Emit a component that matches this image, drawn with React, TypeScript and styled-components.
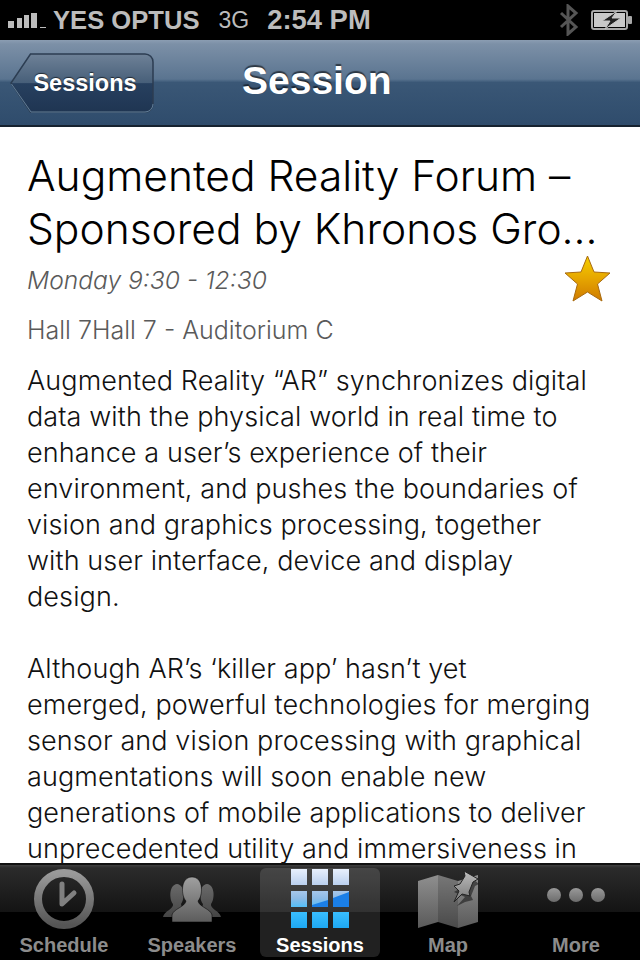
import React from 'react';
import styled, {createGlobalStyle} from 'styled-components';

const Global = createGlobalStyle`
  html, body { margin: 0; padding: 0; background: #fff; }
  #root { width: 640px; height: 960px; overflow: hidden; }
`;

const Page = styled.div`
  width: 640px;
  height: 960px;
  display: flex;
  flex-direction: column;
  overflow: hidden;
  font-family: "Inter", "Liberation Sans", sans-serif;
`;

const StatusBar = styled.div`
  height: 40px;
  flex: none;
  background: #000;
  display: flex;
  align-items: center;
  padding-left: 8px;
  color: #bcbcbc;
  font-family: "Liberation Sans", Arial, sans-serif;
`;

const Carrier = styled.span`
  font-size: 25.6px;
  font-weight: 700;
  margin-left: 7px;
  white-space: nowrap;
`;

const Network = styled.span`
  font-size: 23px;
  margin-left: 19px;
`;

const Clock = styled.span`
  font-size: 27.4px;
  font-weight: 700;
  margin-left: 18px;
  white-space: nowrap;
`;

const StatusRight = styled.div`
  margin-left: auto;
  display: flex;
  align-items: center;
  gap: 11px;
  padding-right: 7px;
`;

const NavBar = styled.div`
  height: 87px;
  flex: none;
  box-sizing: border-box;
  display: flex;
  align-items: center;
  padding: 1px 0 0 10px;
  background: linear-gradient(#8b9db2 0, #7c90a7 4px, #5a7490 46%, #3a5776 50%, #2f4c6c 100%);
  border-bottom: 2px solid #16222f;
`;

const BackButton = styled.div`
  position: relative;
  width: 144px;
  height: 60px;
  display: flex;
  align-items: center;
  justify-content: center;
  padding-left: 6px;
  box-sizing: border-box;
  svg { position: absolute; left: 0; top: 0; }
`;

const BackLabel = styled.span`
  position: relative;
  color: #fff;
  font: 700 23.5px "Liberation Sans", Arial, sans-serif;
  text-shadow: 0 -1px 1px rgba(0, 0, 0, 0.6);
`;

const NavTitle = styled.h1`
  margin: 0 0 4px 88px;
  color: #fff;
  font: 700 39px "Liberation Sans", Arial, sans-serif;
  text-shadow: 0 -2px 1px rgba(0, 0, 0, 0.55);
`;

const Content = styled.main`
  flex: 1;
  min-height: 0;
  overflow: hidden;
  background: #fff;
  padding: 22px 27px 0;
`;

const Title = styled.h2`
  margin: 0;
  width: 580px;
  font-size: 42.5px;
  font-weight: 300;
  line-height: 53px;
  color: #000;
`;

const TitleLine = styled.span`
  display: block;
  white-space: nowrap;
  overflow: hidden;
  text-overflow: ellipsis;
`;

const WhenRow = styled.div`
  display: flex;
  justify-content: space-between;
  align-items: flex-start;
  height: 50px;
`;

const When = styled.div`
  font-size: 24.6px;
  font-style: italic;
  font-weight: 300;
  line-height: 50px;
  color: #5a5a5a;
`;

const Star = styled.svg`
  margin: 0 2px 0 0;
`;

const Where = styled.div`
  font-size: 25px;
  font-weight: 300;
  line-height: 50px;
  color: #5a5a5a;
  margin-bottom: 8px;
`;

const Paragraph = styled.p`
  margin: 0 0 36px;
  font-size: 27px;
  letter-spacing: 0.1px;
  font-weight: 300;
  line-height: 36px;
  color: #111;
  white-space: nowrap;
`;

const TextLine = styled.span`
  display: block;
`;

const TabBar = styled.nav`
  height: 97px;
  flex: none;
  box-sizing: border-box;
  display: grid;
  grid-template-columns: repeat(5, 128px);
  border-top: 2px solid #111;
  background: linear-gradient(#3f3f3f 0, #2b2b2b 3px, #141414 49%, #000 50%, #000 100%);
`;

const Tab = styled.div<{$active?: boolean}>`
  position: relative;
  display: flex;
  flex-direction: column;
  align-items: center;
  padding-top: 3px;
  color: ${p => (p.$active ? '#fff' : '#8c8c8c')};
  &::before {
    content: "";
    display: ${p => (p.$active ? 'block' : 'none')};
    position: absolute;
    left: 4px;
    right: 4px;
    top: 3px;
    bottom: 3px;
    border-radius: 6px;
    background: rgba(255, 255, 255, 0.13);
  }
  svg { position: relative; }
`;

const TabLabel = styled.span`
  position: relative;
  font: 700 20px/24px "Liberation Sans", Arial, sans-serif;
  margin-top: 1px;
  white-space: nowrap;
`;

const SignalBars = () => (
  <svg width="38" height="24" viewBox="0 0 38 24" fill="#bcbcbc">
    <rect x="0" y="13" width="6" height="7" />
    <rect x="9" y="10" width="5" height="10" />
    <rect x="16" y="7" width="5" height="13" />
    <rect x="23" y="5" width="6" height="15" />
    <rect x="32" y="19" width="6" height="1" />
  </svg>
);

const Bluetooth = () => (
  <svg width="22" height="32" viewBox="0 0 22 32" fill="none" stroke="#555" strokeWidth="3">
    <path d="M3 9 L18 23 L10 30 V2 L18 9 L3 23" />
  </svg>
);

const Battery = () => (
  <svg width="42" height="22" viewBox="0 0 42 22">
    <rect x="1" y="2" width="35" height="18" rx="2" fill="#000" stroke="#a8a8a8" strokeWidth="2" />
    <rect x="3" y="4" width="31" height="14" fill="#c8c8c8" />
    <rect x="37" y="7" width="4" height="8" rx="1" fill="#a8a8a8" />
    <path d="M26 2 L11 12 H19 L14 20 L30 9 H21 Z" fill="#222" stroke="#c8c8c8" strokeWidth="1" />
  </svg>
);

const BackShape = () => (
  <svg width="144" height="60" viewBox="0 0 144 60">
    <defs>
      <linearGradient id="back" x1="0" y1="0" x2="0" y2="1">
        <stop offset="0" stopColor="#6e8197" />
        <stop offset="0.5" stopColor="#475f79" />
        <stop offset="0.51" stopColor="#27405f" />
        <stop offset="1" stopColor="#1f3552" />
      </linearGradient>
    </defs>
    <path
      d="M20.5 1 H135 a8 8 0 0 1 8 8 V51 a8 8 0 0 1 -8 8 H20.5 L1 30 Z"
      fill="url(#back)"
      stroke="#2c3d52"
      strokeWidth="1.5"
    />
    <path d="M1.5 31 L21 59 H135 a8 8 0 0 0 8 -8" fill="none" stroke="#5f7c98" strokeWidth="1" />
  </svg>
);

const FavouriteStar = () => (
  <Star width="47" height="48" viewBox="0 0 47 48">
    <defs>
      <linearGradient id="star" x1="0" y1="0" x2="0" y2="1">
        <stop offset="0" stopColor="#f6d000" />
        <stop offset="0.5" stopColor="#e6a600" />
        <stop offset="1" stopColor="#cf7a00" />
      </linearGradient>
    </defs>
    <path
      d="M23.5 1 L30 17 L46 18 L33.5 29 L38 46 L23.5 37 L9 46 L13.5 29 L1 18 L17 17 Z"
      fill="url(#star)"
      stroke="#a86a10"
      strokeWidth="1"
      strokeLinejoin="round"
    />
  </Star>
);

const IconGrad = ({id, from, to}: {id: string; from: string; to: string}) => (
  <linearGradient id={id} x1="0" y1="0" x2="0" y2="1">
    <stop offset="0" stopColor={from} />
    <stop offset="1" stopColor={to} />
  </linearGradient>
);

const ClockIcon = () => (
  <svg width="76" height="64" viewBox="0 0 76 64">
    <defs><IconGrad id="clock" from="#9a9a9a" to="#555" /></defs>
    <circle cx="38" cy="31" r="26" fill="none" stroke="url(#clock)" strokeWidth="8" />
    <path d="M36 16 V36 L48 25" fill="none" stroke="#808080" strokeWidth="5" strokeLinecap="round" strokeLinejoin="round" />
  </svg>
);

const SpeakersIcon = () => (
  <svg width="76" height="64" viewBox="0 0 76 64">
    <defs>
      <IconGrad id="sp" from="#a0a0a0" to="#5c5c5c" />
      <IconGrad id="spb" from="#6a6a6a" to="#444" />
    </defs>
    <path d="M9 49 C10 43 20 41 19 36 C15 31 15 17 23 16 C31 17 31 31 27 36 L30 49 Z" fill="url(#spb)" />
    <path d="M67 49 C66 43 56 41 57 36 C61 31 61 17 53 16 C45 17 45 31 49 36 L46 49 Z" fill="url(#spb)" />
    <path
      d="M18 54 V47 C19 41 31 39 32 33 C27 28 26 9 38 9 C50 9 49 28 44 33 C45 39 57 41 58 47 V54 Z"
      fill="url(#sp)"
      stroke="#000"
      strokeWidth="1"
      strokeOpacity="0.5"
    />
  </svg>
);

const sessionCols = [9, 30, 51];
const sessionRows = [1, 23, 44];

const SessionsIcon = () => (
  <svg width="76" height="64" viewBox="0 0 76 64">
    <defs>
      <linearGradient id="grid" gradientUnits="userSpaceOnUse" x1="0" y1="1" x2="0" y2="60">
        <stop offset="0" stopColor="#e8f0fd" />
        <stop offset="0.28" stopColor="#b9cfee" />
        <stop offset="0.5" stopColor="#8dbbe6" />
        <stop offset="0.7" stopColor="#3cc0ff" />
        <stop offset="1" stopColor="#1ea8f2" />
      </linearGradient>
    </defs>
    {sessionRows.map(y =>
      sessionCols.map(x => <rect key={`${x}-${y}`} x={x} y={y} width="16" height="16" fill="url(#grid)" />)
    )}
    <path d="M30 39 V37 L46 32 V39 Z M51 39 V30 L67 24 V39 Z" fill="#1b7fe6" />
  </svg>
);

const MapIcon = () => (
  <svg width="76" height="64" viewBox="0 0 76 64">
    <defs>
      <IconGrad id="map" from="#8f8f8f" to="#5a5a5a" />
      <IconGrad id="map2" from="#777" to="#4a4a4a" />
      <IconGrad id="pin" from="#bdbdbd" to="#777" />
    </defs>
    <path d="M8 13 L28 7 V54 L8 60 Z" fill="url(#map)" />
    <path d="M28 7 L48 13 V60 L28 54 Z" fill="url(#map2)" />
    <path d="M48 13 L68 7 V54 L48 60 Z" fill="url(#map)" />
    <path d="M56 4 L68 14 L64 16 L60 26 L62 30 L54 32 L46 36 L54 27 L43 22 L50 18 L56 12 Z" fill="#111" opacity="0.55" transform="translate(1 2)" />
    <path d="M54 3 L68 11 L63 14 L59 24 L60 28 L52 26 L44 34 L49 23 L44 18 L50 16 L55 8 Z" fill="url(#pin)" stroke="#222" strokeWidth="1" />
  </svg>
);

const MoreIcon = () => (
  <svg width="76" height="64" viewBox="0 0 76 64">
    <defs><IconGrad id="more" from="#999" to="#6c6c6c" /></defs>
    <circle cx="16" cy="27" r="7" fill="url(#more)" />
    <circle cx="38" cy="27" r="7" fill="url(#more)" />
    <circle cx="60" cy="27" r="7" fill="url(#more)" />
  </svg>
);

const tabs = [
  {label: 'Schedule', icon: <ClockIcon />},
  {label: 'Speakers', icon: <SpeakersIcon />},
  {label: 'Sessions', icon: <SessionsIcon />, active: true},
  {label: 'Map', icon: <MapIcon />},
  {label: 'More', icon: <MoreIcon />},
];

const paragraphs = [
  [
    'Augmented Reality “AR” synchronizes digital',
    'data with the physical world in real time to',
    'enhance a user’s experience of their',
    'environment, and pushes the boundaries of',
    'vision and graphics processing, together',
    'with user interface, device and display',
    'design.',
  ],
  [
    'Although AR’s ‘killer app’ hasn’t yet',
    'emerged, powerful technologies for merging',
    'sensor and vision processing with graphical',
    'augmentations will soon enable new',
    'generations of mobile applications to deliver',
    'unprecedented utility and immersiveness in',
  ],
];

const App: React.FC = () => {
  return (
    <>
      <Global />
      <Page>
        <StatusBar>
          <SignalBars />
          <Carrier>YES OPTUS</Carrier>
          <Network>3G</Network>
          <Clock>2:54 PM</Clock>
          <StatusRight>
            <Bluetooth />
            <Battery />
          </StatusRight>
        </StatusBar>
        <NavBar>
          <BackButton>
            <BackShape />
            <BackLabel>Sessions</BackLabel>
          </BackButton>
          <NavTitle>Session</NavTitle>
        </NavBar>
        <Content>
          <Title>
            <TitleLine>Augmented Reality Forum –</TitleLine>
            <TitleLine>Sponsored by Khronos Group</TitleLine>
          </Title>
          <WhenRow>
            <When>Monday 9:30 - 12:30</When>
            <FavouriteStar />
          </WhenRow>
          <Where>Hall 7Hall 7 - Auditorium C</Where>
          {paragraphs.map(lines => (
            <Paragraph key={lines[0]}>
              {lines.map(line => (
                <TextLine key={line}>{line}</TextLine>
              ))}
            </Paragraph>
          ))}
        </Content>
        <TabBar>
          {tabs.map(t => (
            <Tab key={t.label} $active={t.active}>
              {t.icon}
              <TabLabel>{t.label}</TabLabel>
            </Tab>
          ))}
        </TabBar>
      </Page>
    </>
  );
};

export default App;
